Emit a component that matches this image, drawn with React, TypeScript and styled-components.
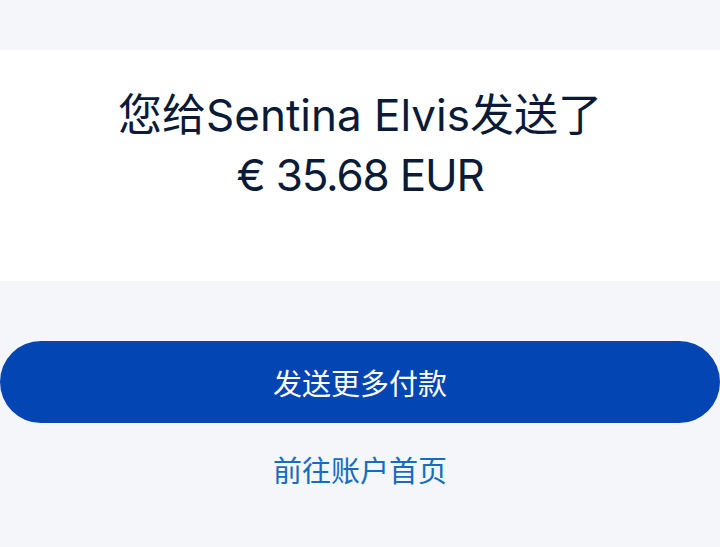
import styled, { createGlobalStyle } from "styled-components";

const GlobalStyle = createGlobalStyle`
  html, body {
    margin: 0;
    padding: 0;
    background: #f4f6f9;
  }
  body {
    font-family: Inter, "Noto Sans CJK SC", sans-serif;
  }
`;

const App = () => {
  const recipient = "Sentina Elvis";
  const amount = "35.68";
  return (
    <>
      <GlobalStyle />
      <Page>
        <TopBand />
        <Summary>
          <Title>您给{recipient}发送了</Title>
          <Title $tight>€ {amount} EUR</Title>
        </Summary>
        <Actions>
          <PrimaryButton>发送更多付款</PrimaryButton>
          <TextLink href="#">前往账户首页</TextLink>
        </Actions>
      </Page>
    </>
  );
};

export default App;

const Page = styled.div`
  display: flex;
  flex-direction: column;
  min-height: 547px;
  background: #f4f6f9;
`;

const TopBand = styled.div`
  height: 50px;
  background: #f4f6f9;
`;

const Summary = styled.div`
  display: flex;
  flex-direction: column;
  align-items: center;
  background: #ffffff;
  padding: 35px 20px 76px;
`;

const Title = styled.p<{ $tight?: boolean }>`
  margin: 0;
  font-size: 44px;
  line-height: 60px;
  color: #0b1a36;
  text-align: center;
  white-space: nowrap;
  letter-spacing: ${(p) => (p.$tight ? "-1.2px" : "0")};
`;

const Actions = styled.div`
  display: flex;
  flex-direction: column;
  align-items: center;
  padding-top: 60px;
`;

const PrimaryButton = styled.button`
  width: 100%;
  height: 82px;
  border: none;
  border-radius: 41px;
  background: #0445b4;
  color: #ffffff;
  font-family: Inter, "Noto Sans CJK SC", sans-serif;
  font-size: 29px;
  cursor: pointer;
`;

const TextLink = styled.a`
  margin-top: 29px;
  font-size: 29px;
  line-height: 40px;
  color: #176cc0;
  text-decoration: none;
`;
